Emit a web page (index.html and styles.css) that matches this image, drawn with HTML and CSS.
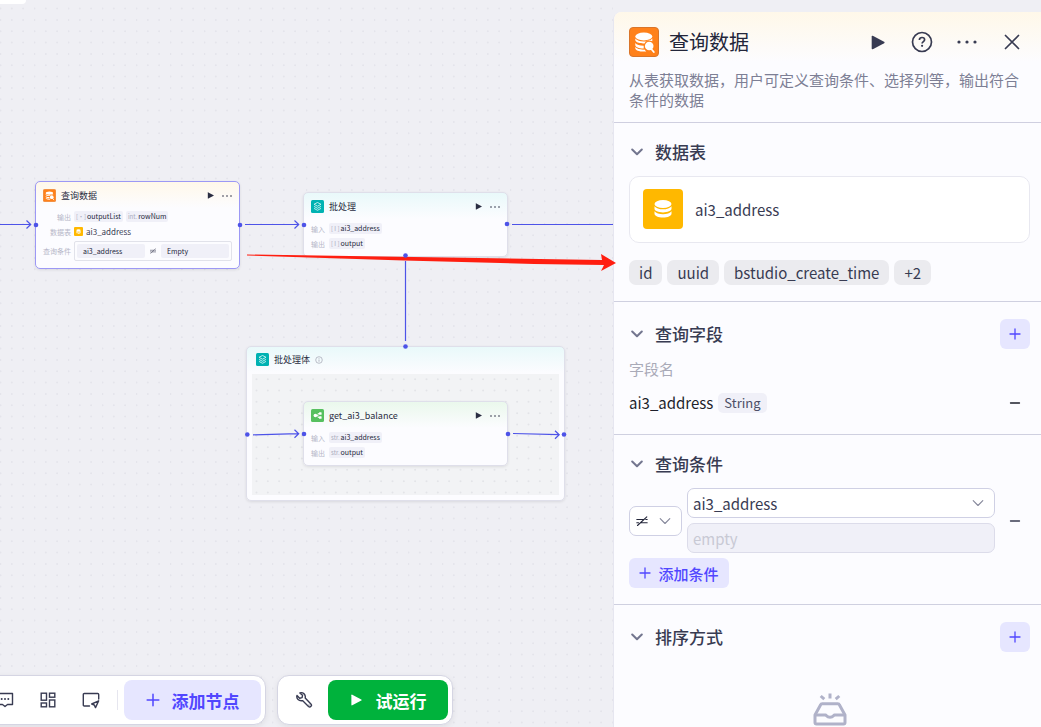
FILE: index.html
```html
<!DOCTYPE html>
<html lang="zh-CN">
<head>
<meta charset="utf-8">
<title>查询数据</title>
<link rel="stylesheet" href="styles.css">
</head>
<body>
<svg class="defs" aria-hidden="true">
  <defs>
    <pattern id="dots" width="34" height="34" patternUnits="userSpaceOnUse" y="19">
      <g fill="#e4e4eb">
        <circle cx="0.5" cy="1" r="1"/><circle cx="11.8" cy="1" r="1"/><circle cx="23.1" cy="1" r="1"/>
        <circle cx="0.5" cy="12.3" r="1"/><circle cx="11.8" cy="12.3" r="1"/><circle cx="23.1" cy="12.3" r="1"/>
        <circle cx="0.5" cy="23.6" r="1"/><circle cx="11.8" cy="23.6" r="1"/><circle cx="23.1" cy="23.6" r="1"/>
      </g>
    </pattern>
    <pattern id="dots-inner" width="34" height="34" patternUnits="userSpaceOnUse" x="3" y="4">
      <g fill="#e3e4e8">
        <circle cx="1.5" cy="1.2" r="1"/><circle cx="12.8" cy="1.2" r="1"/><circle cx="24.1" cy="1.2" r="1"/>
        <circle cx="1.5" cy="12.5" r="1"/><circle cx="12.8" cy="12.5" r="1"/><circle cx="24.1" cy="12.5" r="1"/>
        <circle cx="1.5" cy="23.8" r="1"/><circle cx="12.8" cy="23.8" r="1"/><circle cx="24.1" cy="23.8" r="1"/>
      </g>
    </pattern>
    <symbol id="play" viewBox="0 0 16 16"><path d="M1.8 1.6c0-.7.6-1 1.200-.7l12 6.300c.7.400.7 1.200 0 1.600l-12 6.300c-.6.300-1.200 0-1.200-.7z" fill="currentColor"/></symbol>
    <symbol id="more" viewBox="0 0 20 4"><g fill="currentColor"><circle cx="2" cy="2" r="1.600"/><circle cx="10" cy="2" r="1.600"/><circle cx="18" cy="2" r="1.600"/></g></symbol>
    <symbol id="plus" viewBox="0 0 12 12"><path d="M6 1v10M1 6h10" stroke="currentColor" stroke-width="1.300" stroke-linecap="round"/></symbol>
    <symbol id="minus" viewBox="0 0 12 12"><path d="M1.500 6h9" stroke="currentColor" stroke-width="1.300" stroke-linecap="round"/></symbol>
    <symbol id="chevron" viewBox="0 0 12 12"><path d="M1.200 3.500 6 8.300l4.800-4.800" fill="none" stroke="currentColor" stroke-width="2" stroke-linecap="round" stroke-linejoin="round"/></symbol>
    <symbol id="chevron-thin" viewBox="0 0 12 12"><path d="M1.200 3.700 6 8.500l4.800-4.800" fill="none" stroke="currentColor" stroke-width="1.100" stroke-linecap="round" stroke-linejoin="round"/></symbol>
    <symbol id="not-equal" viewBox="0 0 12 12"><path d="M.8 4.500h6.700M4.500 7.800h6.700M1.500 10.500 10.800 1.800M.8 7.800h1.700M9.800 4.500h1.400" fill="none" stroke="currentColor" stroke-width="1.100" stroke-linecap="round"/></symbol>
    <symbol id="database" viewBox="0 0 20 20">
      <g fill="currentColor"><ellipse cx="10" cy="5" rx="8.500" ry="4"/>
      <path d="M1.500 7.200c1.500 2 4.700 3.100 8.500 3.100s7-1.100 8.500-3.100v2.600c0 2-3.800 3.600-8.500 3.600s-8.500-1.600-8.500-3.600z"/>
      <path d="M1.500 12.200c1.500 2 4.700 3 8.500 3s7-1 8.500-3v2.500c0 2-3.800 3.800-8.500 3.800s-8.500-1.800-8.500-3.800z"/></g>
    </symbol>
    <symbol id="query" viewBox="0 0 30 30">
      <rect x=".5" y=".5" width="29" height="29" rx="3.500" fill="#ff811a" stroke="#d9752a"/>
      <g fill="#fff"><ellipse cx="14.800" cy="9.500" rx="8.500" ry="3.900"/>
      <path d="M6.300 11.600c1.500 2 4.500 2.900 8.500 2.900s7-1 8.500-2.900v2.700c-1-.5-2-.8-3.200-.8-2 0-3.800 1.100-4.600 2.900-5 .2-9.200-1.300-9.200-3.400z"/>
      <path d="M6.300 16c1.400 1.800 4.300 2.700 8.400 2.700v2.800c-4.800 0-8.400-1.500-8.400-3.500z"/>
      <path d="M6.300 20.100c1.500 1.800 4.800 2.700 9.200 2.500.5.900 1 1.400 1.800 1.900-6.200.5-11-1-11-3.300z"/>
      <circle cx="20.200" cy="19" r="4.300"/></g>
      <path d="m22.300 22 2.500 3" stroke="#fff" stroke-width="1.800" stroke-linecap="round"/>
    </symbol>
    <symbol id="batch" viewBox="0 0 13 13">
      <rect width="13" height="13" rx="1.500" fill="#00b2b2"/>
      <g fill="none" stroke="#e3fafa" stroke-width=".8" stroke-linejoin="round"><path d="m6.500 2.500 3.500 1.800-3.500 1.900L3 4.300z"/><path d="m3 6.400 3.500 1.900L10 6.400"/><path d="m3 8.400 3.500 1.900L10 8.400"/></g>
    </symbol>
    <symbol id="subflow" viewBox="0 0 13 13">
      <rect width="13" height="13" rx="1.500" fill="#56c05f"/>
      <path d="M5 6.500h2v-2h1.500M7 6.500v2h1.500" fill="none" stroke="#fff" stroke-width=".8"/>
      <g fill="#fff"><circle cx="4.400" cy="6.500" r="1.800"/><rect x="8" y="3.200" width="2.600" height="2.600" rx=".6"/><rect x="8" y="7.200" width="2.600" height="2.600" rx=".6"/></g>
    </symbol>
  </defs>
</svg>

<div class="editor">
  <main class="canvas">
    <svg class="grid"><rect width="100%" height="100%" fill="url(#dots)"/></svg>
    <div class="corner"></div>

    <article class="node node-query selected">
      <header class="node-head">
        <svg class="node-icon"><use href="#query"/></svg>
        <h2>查询数据</h2>
        <button aria-label="运行"><svg class="n-play"><use href="#play"/></svg></button>
        <button aria-label="更多"><svg class="n-more"><use href="#more"/></svg></button>
      </header>
      <div class="rows wide">
        <span class="label">输出</span>
        <div class="chips"><span class="chip"><i>[·]</i>outputList</span><span class="chip"><i>int.</i>rowNum</span></div>
        <span class="label">数据表</span>
        <div class="table-ref"><span class="mini"><svg><use href="#database"/></svg></span>ai3_address</div>
        <span class="label">查询条件</span>
        <div class="cond"><span>ai3_address</span><svg><use href="#not-equal"/></svg><span>Empty</span></div>
      </div>
    </article>

    <article class="node node-batch teal">
      <header class="node-head">
        <svg class="node-icon"><use href="#batch"/></svg>
        <h2>批处理</h2>
        <button aria-label="运行"><svg class="n-play"><use href="#play"/></svg></button>
        <button aria-label="更多"><svg class="n-more"><use href="#more"/></svg></button>
      </header>
      <div class="rows">
        <span class="label">输入</span><div class="chips"><span class="chip"><i>[ I ]</i>ai3_address</span></div>
        <span class="label">输出</span><div class="chips"><span class="chip"><i>[ I ]</i>output</span></div>
      </div>
    </article>

    <section class="node node-body teal">
      <header class="node-head">
        <svg class="node-icon"><use href="#batch"/></svg>
        <h2>批处理体</h2>
        <svg class="n-info" viewBox="0 0 8 8"><circle cx="4" cy="4" r="3.300" fill="none" stroke="#a2a3b2" stroke-width=".7"/><path d="M4 3.500v2.200M4 2v.7" stroke="#a2a3b2" stroke-width=".8"/></svg>
      </header>
      <div class="body-area"><svg><rect width="100%" height="100%" fill="url(#dots-inner)"/></svg></div>
    </section>

    <article class="node node-balance green">
      <header class="node-head">
        <svg class="node-icon"><use href="#subflow"/></svg>
        <h2>get_ai3_balance</h2>
        <button aria-label="运行"><svg class="n-play"><use href="#play"/></svg></button>
        <button aria-label="更多"><svg class="n-more"><use href="#more"/></svg></button>
      </header>
      <div class="rows">
        <span class="label">输入</span><div class="chips"><span class="chip"><i>str.</i>ai3_address</span></div>
        <span class="label">输出</span><div class="chips"><span class="chip"><i>str.</i>output</span></div>
      </div>
    </article>

    <svg class="edges">
      <g fill="none" stroke="#4d53e8" stroke-width="1.200">
        <path d="M0 224.500H30M26.500 220.500l4.200 4-4.200 4"/>
        <path d="M245 224.500H298M294.500 220.500l4.200 4-4.200 4"/>
        <path d="M512 224.500H613"/>
        <path d="M405.500 261v80"/>
        <path d="M253 434.800 298 433.700M294.500 429.700l4.200 4-4.200 4"/>
        <path d="M513 433.500 559 434.700M555 430.700l4.200 4-4.200 4"/>
      </g>
      <path d="M247 254.500 602 260l-1-6 15 9-15 8 3-6-70-1-130-3.500-157-5z" fill="#ff1e10"/>
      <g fill="#4d53e8">
        <circle cx="36" cy="225" r="2.300"/><circle cx="240" cy="225" r="2.300"/><circle cx="304" cy="225" r="2.300"/><circle cx="507" cy="224" r="2.300"/>
        <circle cx="405.500" cy="255.500" r="2.300"/><circle cx="405.500" cy="346.500" r="2.300"/>
        <circle cx="247.300" cy="434.500" r="2.300"/><circle cx="304" cy="434" r="2.300"/><circle cx="508" cy="434" r="2.300"/><circle cx="564" cy="434.500" r="2.300"/>
      </g>
    </svg>

    <div class="toolbars">
      <div class="toolbar tools">
        <button class="tool" aria-label="评论"><svg viewBox="0 0 18 18"><path d="M1.500 2.500h15v11h-5L9 15.500 6.500 13.500h-5z" fill="none" stroke="currentColor" stroke-width="1.400" stroke-linejoin="round"/><g fill="currentColor"><circle cx="5.700" cy="8" r="1"/><circle cx="9" cy="8" r="1"/><circle cx="12.300" cy="8" r="1"/></g></svg></button>
        <button class="tool" aria-label="布局"><svg viewBox="0 0 18 18"><g fill="none" stroke="currentColor" stroke-width="1.400"><rect x="2.200" y="2.200" width="5.300" height="7"/><rect x="10.500" y="2.200" width="5.300" height="4"/><rect x="2.200" y="12" width="5.300" height="3.800"/><rect x="10.500" y="9" width="5.300" height="6.800"/></g></svg></button>
        <button class="tool" aria-label="小地图"><svg viewBox="0 0 18 18"><g fill="none" stroke="currentColor" stroke-width="1.400" stroke-linejoin="round" stroke-linecap="round"><path d="M7.500 15H2.300c-.6 0-1-.4-1-1V3.500c0-.6.4-1 1-1h13.400c.6 0 1 .4 1 1V8"/><path d="m16.700 9.800-7 3.200 2.600 1 1.200 2.600z"/></g></svg></button>
        <span class="sep"></span>
        <button class="add-node"><svg><use href="#plus"/></svg>添加节点</button>
      </div>
      <div class="toolbar run">
        <button class="tool wrench" aria-label="调试"><svg viewBox="0 0 18 18"><path d="M2 4.500 4.700 7.200 7.100 6.600 7.500 4.300 4.900 1.900C7.600.9 11 3.200 10.200 7l5.700 5.900c1.600 1.700-.7 4-2.400 2.500L7.500 9.600C4 10.500 1 7.600 2 4.500z" fill="none" stroke="currentColor" stroke-width="1.400" stroke-linejoin="round"/><circle cx="14" cy="14" r=".6" fill="currentColor"/></svg></button>
        <button class="test-run"><svg><use href="#play"/></svg>试运行</button>
      </div>
    </div>
  </main>

  <aside class="panel">
    <header class="panel-head">
      <div class="title-row">
        <svg class="title-icon"><use href="#query"/></svg>
        <h1>查询数据</h1>
        <div class="actions">
          <button aria-label="运行"><svg class="a-play"><use href="#play"/></svg></button>
          <button aria-label="帮助"><svg class="a-help" viewBox="0 0 22 22"><circle cx="11" cy="11" r="9.500" fill="none" stroke="currentColor" stroke-width="1.700"/><path d="M8.400 9c0-1.500 1.100-2.500 2.600-2.500s2.600 1 2.600 2.300c0 1.700-2.500 1.900-2.500 3.700" fill="none" stroke="currentColor" stroke-width="1.700"/><circle cx="11.100" cy="14.800" r="1.100" fill="currentColor"/></svg></button>
          <button aria-label="更多"><svg class="a-more"><use href="#more"/></svg></button>
          <button aria-label="关闭"><svg class="a-close" viewBox="0 0 16 16"><path d="m1.500 1.500 13 13m0-13-13 13" stroke="currentColor" stroke-width="1.700" stroke-linecap="round"/></svg></button>
        </div>
      </div>
      <p>从表获取数据，用户可定义查询条件、选择列等，输出符合条件的数据</p>
    </header>

    <section class="sec">
      <div class="sec-head"><svg><use href="#chevron"/></svg><h2>数据表</h2></div>
      <div class="table-card"><span class="db"><svg><use href="#database"/></svg></span>ai3_address</div>
      <div class="tags"><span>id</span><span>uuid</span><span>bstudio_create_time</span><span>+2</span></div>
    </section>

    <section class="sec addable">
      <div class="sec-head"><svg><use href="#chevron"/></svg><h2>查询字段</h2><button class="add" aria-label="添加字段"><svg><use href="#plus"/></svg></button></div>
      <div class="field-label">字段名</div>
      <div class="field"><span>ai3_address</span><span class="type">String</span><button class="remove" aria-label="删除字段"><svg><use href="#minus"/></svg></button></div>
    </section>

    <section class="sec">
      <div class="sec-head"><svg><use href="#chevron"/></svg><h2>查询条件</h2></div>
      <div class="condition">
        <div class="select op"><select aria-label="运算符"><option aria-label="不等于"></option></select><svg class="ne"><use href="#not-equal"/></svg><svg class="caret"><use href="#chevron-thin"/></svg></div>
        <div class="operands">
          <div class="select"><select aria-label="字段"><option>ai3_address</option></select><svg class="caret"><use href="#chevron-thin"/></svg></div>
          <input type="text" placeholder="empty" aria-label="值" disabled>
        </div>
        <button class="remove" aria-label="删除条件"><svg><use href="#minus"/></svg></button>
      </div>
      <button class="add-cond"><svg><use href="#plus"/></svg>添加条件</button>
    </section>

    <section class="sec addable">
      <div class="sec-head"><svg><use href="#chevron"/></svg><h2>排序方式</h2><button class="add" aria-label="添加排序"><svg><use href="#plus"/></svg></button></div>
      <svg class="empty" viewBox="0 0 34 34"><g fill="none" stroke="#b0b2c9" stroke-width="3" stroke-linejoin="round"><path d="M2 22v7.500c0 1 .6 1.500 1.500 1.500h27c.9 0 1.500-.5 1.500-1.500V22L26.500 12c-.3-.8-1-1.200-1.800-1.200H9.300c-.8 0-1.500.4-1.800 1.200z"/><path d="M2 22h10.500c1 0 1.200 2.300 4.500 2.300s3.500-2.300 4.500-2.300H32"/><path d="M17 .5v5M7.700 3l3.600 3.200M26.300 3l-3.600 3.200"/></g></svg>
    </section>
  </aside>
</div>
</body>
</html>
```

FILE: styles.css
```css
* { box-sizing: border-box; }
body, h1, h2, p { margin: 0; }
h1, h2 { font-weight: 500; }
body {
  background: #efeff4;
  color: #383b52;
  font-family: "Noto Sans CJK SC", "Noto Sans", sans-serif;
  font-size: 15px;
}
button {
  display: flex;
  align-items: center;
  justify-content: center;
  padding: 0;
  border: 0;
  background: none;
  color: inherit;
  font: inherit;
}
svg { display: block; flex: none; }
.defs { position: absolute; width: 0; height: 0; }

.editor {
  display: grid;
  grid-template-columns: minmax(0, 1fr) 428px;
  height: 100vh;
  overflow: hidden;
}

/* Canvas */
.canvas { position: relative; z-index: 1; display: flex; }
.grid, .edges { position: absolute; inset: 0; width: 100%; height: 100%; }
.edges { overflow: visible; pointer-events: none; }
.corner {
  position: absolute;
  top: 0;
  left: 0;
  width: 26px;
  height: 4px;
  background: #fff;
  border-bottom-right-radius: 4px;
}

.node {
  position: absolute;
  width: 205px;
  padding: 7px;
  border: 1px solid #dfdfea;
  border-radius: 5px;
  background: #fcfcff;
  box-shadow: 0 1px 3px #00000018;
}
.node-query { left: 35px; top: 181px; background: linear-gradient(#fff8ea, #fcfcff 26px); }
.node-batch { left: 303px; top: 192px; }
.node-body { left: 246px; top: 346px; width: 319px; padding: 6px 5px 5px; }
.node-balance { left: 303px; top: 401px; }
.teal { background: linear-gradient(#e9f9fa, #fcfcff 26px); }
.green { background: linear-gradient(#eaf8ec, #fcfcff 26px); }
.node.selected { border-color: #9c98f5; }

.node-head { display: flex; align-items: center; height: 13px; gap: 5px; color: #2a2d42; }
.node-head h2 { flex: 1; font-size: 9px; font-weight: 400; line-height: 13px; }
.node-head button + button { margin-left: 3px; }
.node-body .node-head { padding-left: 4px; }
.node-body h2 { flex: none; }
.node-icon { width: 13px; height: 13px; }
.n-play { width: 7px; height: 7px; }
.n-more { width: 10px; height: 2px; }
.n-info { width: 8px; height: 8px; }

.rows {
  display: grid;
  grid-template-columns: 14px minmax(0, 1fr);
  gap: 4px;
  margin-top: 10px;
  align-items: center;
}
.rows.wide { grid-template-columns: 28px minmax(0, 1fr); column-gap: 3px; margin-top: 9px; text-align: right; }
.label { color: #b6b7c8; font-size: 7px; line-height: 10px; }
.chips { display: flex; gap: 3px; }
.chip, .cond span { border-radius: 2px; background: #f0f0f8; font-size: 7px; line-height: 10px; color: #23263a; }
.chip { padding: 0 2px; }
.chip i { margin-right: 1px; color: #a9aabc; font-size: 6px; font-style: normal; }
.table-ref { display: flex; align-items: center; gap: 3px; font-size: 8px; line-height: 11px; }
.mini { padding: 2px; border-radius: 1px; background: #ffb800; color: #fff; }
.mini svg { width: 5px; height: 5px; }
.cond {
  display: grid;
  grid-template-columns: 1fr 6px 1fr;
  align-items: center;
  gap: 5px;
  padding: 2px;
  border: 1px solid #e1e2ea;
  border-radius: 2px;
  text-align: left;
}
.cond span { padding: 2px 6px; }
.cond svg { width: 6px; height: 6px; }

.body-area { height: 121px; margin-top: 8px; background: #f2f3f5; }
.body-area svg { width: 100%; height: 100%; }

/* Toolbars */
.toolbars { position: relative; display: flex; align-self: flex-end; gap: 11px; margin: 0 0 2px -21px; }
.toolbar {
  display: flex;
  align-items: center;
  padding: 4px;
  border: 1px solid #d5d5e3;
  border-radius: 12px;
  background: #fff;
  box-shadow: 0 2px 6px #00000012;
}
.tools { padding-left: 16px; gap: 25px; }
.tool svg { width: 18px; height: 18px; }
.sep { width: 1px; height: 20px; margin: 0 -19px 0 -8px; background: #e6e6ef; }
.add-node, .test-run { height: 40px; border-radius: 8px; font-size: 17px; font-weight: 700; }
.add-node { width: 137px; gap: 12px; background: #e6e6ff; color: #5147ff; }
.add-node svg { width: 14px; height: 14px; }
.wrench { padding: 0 15px 0 13px; }
.test-run { width: 120px; gap: 14px; background: #00b23c; color: #fff; }
.test-run svg { width: 12px; height: 12px; }

/* Settings panel */
.panel {
  margin-top: 12px;
  overflow: hidden;
  border-left: 1px solid #e6e6f0;
  border-top-left-radius: 8px;
  background: #fcfcff;
}
.panel-head {
  padding: 15px 11px 12px 15px;
  border-bottom: 1px solid #cfcfe0;
  background: linear-gradient(#fff8e9, #fcfcff 50px);
}
.title-row { display: flex; align-items: center; gap: 10px; }
.title-icon { width: 30px; height: 30px; }
h1 { font-size: 20px; line-height: 30px; color: #23263a; font-weight: 400; }
.actions { display: flex; align-items: center; gap: 23px; margin: 0 7px 0 auto; }
.actions button { width: 22px; height: 22px; }
.a-play { width: 15px; height: 15px; }
.a-help { width: 22px; height: 22px; }
.a-more { width: 20px; height: 4px; }
.a-close { width: 16px; height: 16px; }
.panel-head p { margin-top: 13px; color: #7d7f95; line-height: 20px; }

.sec { padding: 14px 11px 16px 15px; border-bottom: 1px solid #cfd0e0; }
.sec.addable { padding-top: 17px; }
.sec:last-child { border: 0; }
.sec-head { display: flex; align-items: center; min-height: 30px; gap: 12px; padding-left: 2px; }
.sec-head h2 { font-size: 17px; line-height: 24px; }
.sec-head > svg { width: 12px; height: 12px; color: #73768f; }
.add { width: 30px; height: 30px; margin-left: auto; border-radius: 6px; background: #e6e6ff; color: #5147ff; }
.add svg, .remove svg, .add-cond svg { width: 12px; height: 12px; }

.table-card {
  display: flex;
  align-items: center;
  gap: 12px;
  margin-top: 9px;
  padding: 12px 13px 13px;
  border: 1px solid #e8e8f0;
  border-radius: 10px;
  background: #fff;
}
.db { padding: 10px; border-radius: 4px; background: #ffb800; color: #fff; }
.db svg { width: 20px; height: 20px; }
.tags { display: flex; gap: 5px; margin-top: 17px; }
.tags span { padding: 0 10px; border-radius: 7px; background: #ebebef; line-height: 25px; }

.field-label { margin-top: 10px; color: #a9aab8; line-height: 20px; }
.field { display: flex; align-items: center; gap: 5px; margin-top: 9px; color: #1d1f2b; line-height: 30px; }
.type { padding: 0 6px; border-radius: 5px; background: #f0f0f8; color: #4c4f66; font-size: 13px; line-height: 20px; }
.remove { width: 30px; height: 30px; }
.field .remove { margin-left: auto; }

.condition { display: grid; grid-template-columns: 53px minmax(0, 1fr) 30px; align-items: center; gap: 5px; margin-top: 9px; }
.operands { display: grid; gap: 5px; }
.select { position: relative; }
select, input {
  display: block;
  appearance: none;
  width: 100%;
  height: 30px;
  padding: 0 5px;
  border: 1px solid #cfd0e4;
  border-radius: 7px;
  background: #fff;
  color: #383b52;
  font: inherit;
}
input:disabled { background: #f0f0f8; border-color: #dcdcea; }
input::placeholder { color: #c8c9d4; }
.caret, .ne { position: absolute; top: 9px; right: 11px; width: 12px; height: 12px; color: #85879a; pointer-events: none; }
.ne { left: 7px; color: #23263a; }
.add-cond { width: 100px; height: 30px; margin-top: 5px; gap: 7px; border-radius: 6px; background: #e6e6ff; color: #5147ff; font-weight: 500; }
.empty { width: 34px; height: 34px; margin: 41px auto 0; }
```
